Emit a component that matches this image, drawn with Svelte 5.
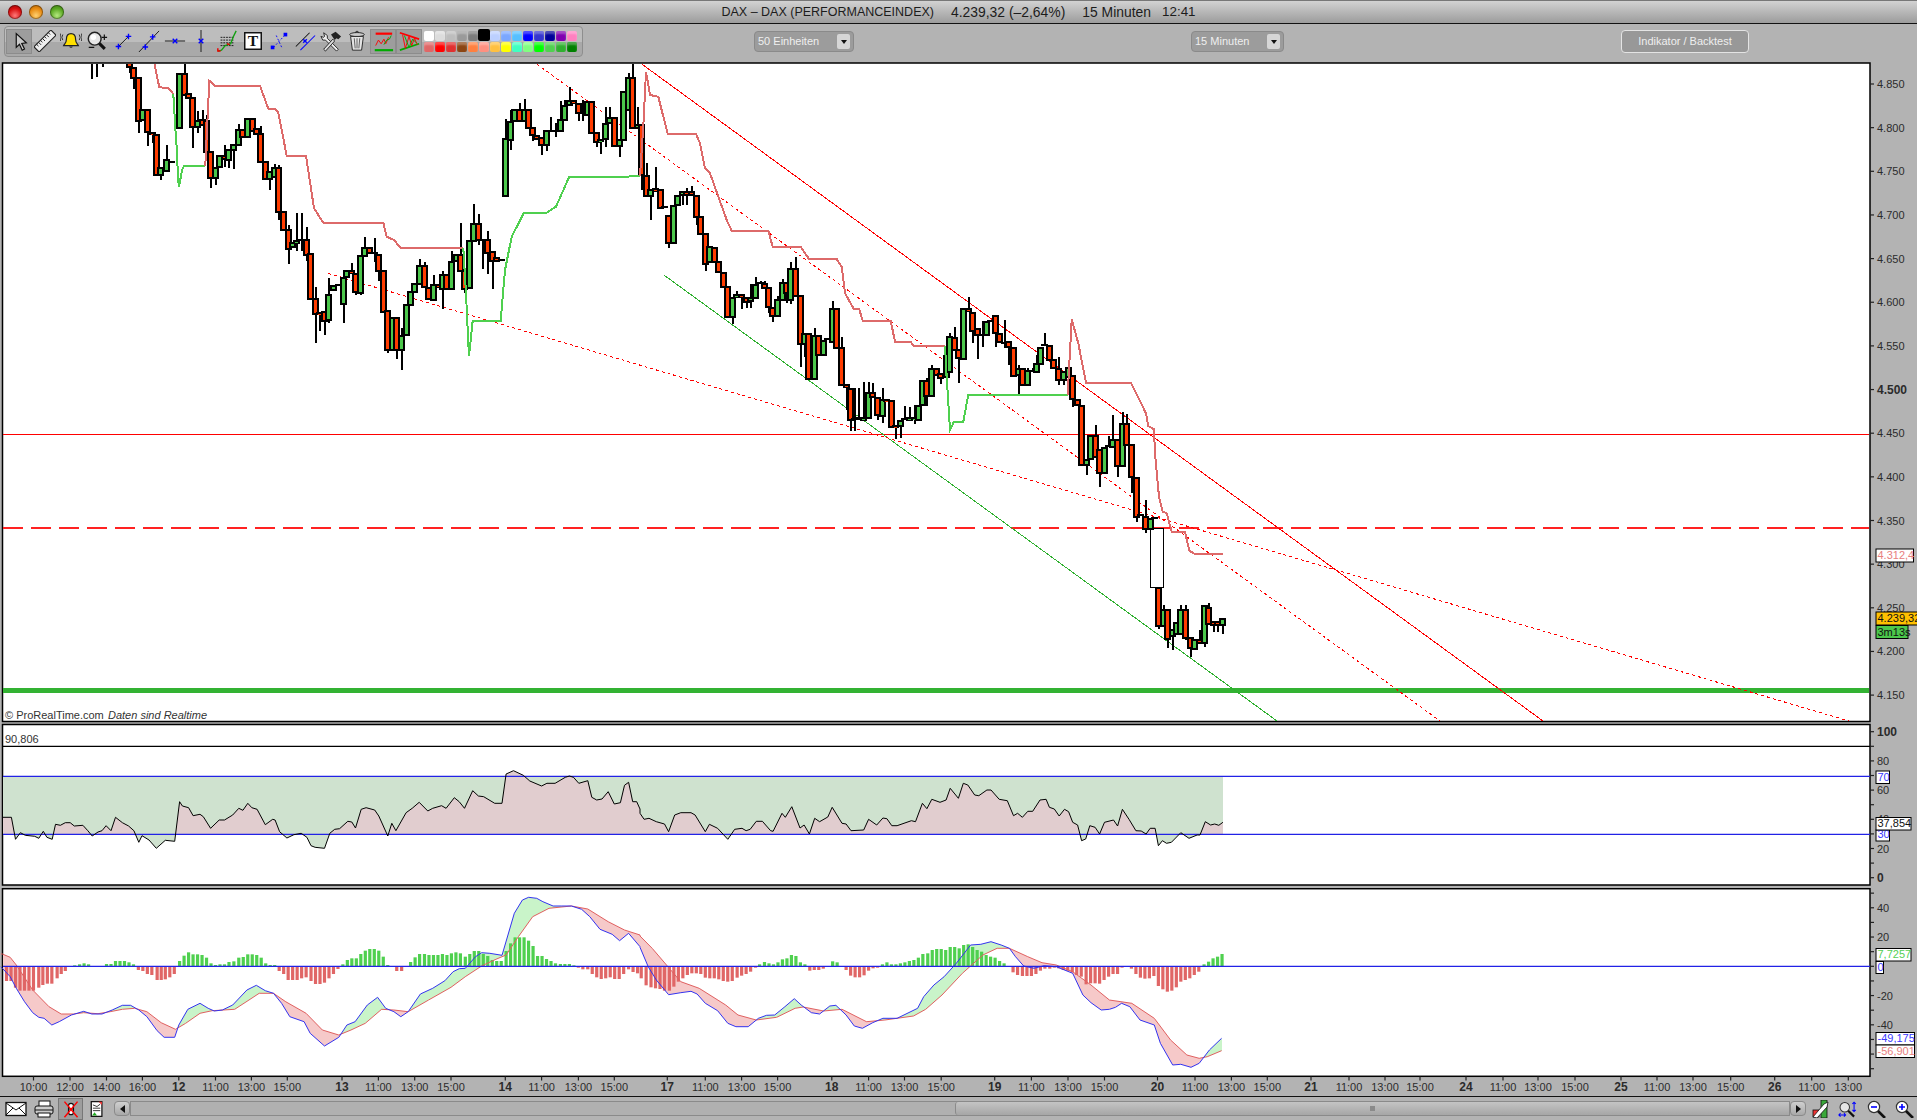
<script>
    // crop readings are kept in zoomed units, xy() brings them back to page pixels
    const xy = (ox, oy, sx, sy, str) =>
        str.trim().split(/\s+/).map((p) => {
            const [x, y] = p.split(',').map(Number);
            return [ox + x / sx, oy + y / sy];
        });
    const toPts = (list) => list.map((p) => `${p[0].toFixed(1)},${p[1].toFixed(1)}`).join(' ');
    const A = (s) => toPts(xy(90, 60, 3, 3, s));
    const B = (s) => toPts(xy(400, 60, 3, 3, s));
    const C = (s) => toPts(xy(700, 220, 3, 3, s));
    const D = (s) => toPts(xy(1000, 300, 3, 3, s));

    const stopLines = [
        ['#dd6a6a', A('193,10 208,82 235,84 250,102')],
        ['#4fd04f', A('250,102 255,185 258,240 262,280 263,350 267,382 276,330 282,317 346,317')],
        ['#dd6a6a', A('346,317 350,230 358,62 375,77 510,77 535,146 555,146 565,158 590,287 648,287 672,445 700,488 880,488 890,530 912,540 930,562')],
        ['#dd6a6a', B('0,564 190,564')],
        ['#4fd04f', B('190,564 198,700 205,850 207,888 218,782 302,782 315,630 335,530 372,458 440,458 468,440 508,350 678,350 720,347')],
        ['#dd6a6a', B('720,347 730,200 738,35 750,105 775,110 803,222 888,222 900,250 915,325 930,340')],
        ['#dd6a6a', C('30,-140 80,0 95,32 205,32 218,80 302,80 327,117 410,117 425,140 435,220 462,268 478,268 488,302 572,302 585,365 632,365 640,377 735,377')],
        ['#4fd04f', C('735,377 740,470 750,630 762,605 790,605 805,524 930,524')],
        ['#4fd04f', D('30,284 203,284')],
        ['#dd6a6a', D('203,284 215,58 235,130 258,248 393,248 438,340 445,378 462,388 465,460 477,590 488,635 500,640 515,695 555,695 568,752 585,762 668,762')]
    ];

    // x, body top, body bottom, high (0 = none), low (0 = none), colour
    const cropA = [
        [5,-9,-9,0,58,'r'],[20,-9,-9,0,52,'r'],[36,-9,-9,0,22,'r'],
        [118,1,22,1,40,'r'],[130,20,55,0,88,'r'],[146,50,182,0,218,'r'],[158,146,180,0,0,'g'],[172,146,215,0,258,'r'],
        [186,215,222,0,248,'r'],[200,222,345,0,0,'r'],[212,322,345,0,360,'g'],[228,298,332,255,0,'g'],[245,305,305,0,0,'g'],
        [268,38,205,0,0,'g'],[282,40,105,10,0,'r'],[296,100,115,0,0,'r'],[308,110,202,0,264,'r'],[322,180,202,152,218,'g'],
        [336,178,196,150,0,'r'],[348,180,275,165,275,'r'],[362,272,354,0,384,'r'],[376,320,354,0,376,'g'],[388,284,320,0,0,'g'],
        [402,285,296,255,320,'r'],[414,266,300,0,324,'g'],[430,252,270,0,326,'g'],[444,206,254,192,0,'g'],[456,206,230,0,0,'r'],
        [472,174,232,0,0,'g'],[486,174,212,0,0,'r'],[498,204,222,0,0,'r'],[512,218,306,198,0,'r'],[526,302,358,0,0,'r'],
        [538,334,358,0,390,'g'],[552,322,352,312,0,'g'],[566,322,456,316,480,'r'],[580,452,510,0,0,'r'],[594,508,566,495,612,'r'],
        [606,546,560,0,0,'g'],[620,540,548,460,574,'g'],[634,540,540,460,574,'g'],[648,536,584,502,604,'r'],[662,578,716,0,0,'r'],
        [676,714,762,680,848,'r'],[688,756,758,0,812,'r'],[702,754,782,0,824,'r'],[716,702,780,655,790,'g'],[730,676,690,0,0,'g'],
        [744,675,675,0,0,'g'],[760,650,732,0,788,'g'],[770,630,652,0,0,'g'],[784,630,640,610,0,'r'],[796,638,696,0,706,'r'],
        [810,584,698,0,706,'g'],[824,560,588,530,0,'g'],[838,562,580,0,0,'r'],[852,580,580,534,606,'r'],[866,582,632,0,662,'r'],
        [880,630,756,0,0,'r'],[892,750,870,0,878,'r'],[906,772,870,0,0,'g'],[920,772,870,0,898,'r']
    ];
    const cropB = [
        [5,825,870,805,930,'g'],[18,732,826,0,0,'g'],[30,692,736,0,0,'g'],[44,668,696,0,0,'g'],[58,614,672,596,0,'g'],
        [72,614,680,606,0,'r'],[86,680,716,0,0,'r'],[100,672,720,646,0,'g'],[114,672,680,0,0,'r'],[128,642,686,632,748,'g'],
        [140,642,686,0,0,'r'],[154,602,686,572,0,'g'],[168,582,602,0,0,'g'],[180,582,632,490,0,'r'],[192,630,686,0,700,'r'],
        [208,540,684,0,0,'g'],[220,488,544,433,0,'g'],[234,488,540,462,556,'r'],[246,540,540,0,626,'r'],[262,536,578,514,642,'r'],
        [276,574,602,0,686,'r'],[290,592,604,0,0,'r'],[304,600,600,0,0,'r'],
        [316,234,408,176,0,'g'],[332,182,240,150,270,'g'],[344,148,184,0,0,'g'],[358,148,182,130,0,'r'],[372,148,182,118,0,'g'],
        [386,146,204,0,0,'r'],[398,202,226,0,242,'r'],[410,224,236,0,0,'r'],[424,232,254,0,284,'r'],[438,210,256,0,272,'g'],
        [452,212,212,172,0,'g'],[466,212,212,190,232,'g'],[482,178,212,122,0,'g'],[494,134,180,120,0,'g'],[508,120,136,82,0,'g'],
        [520,120,130,0,0,'r'],[535,128,158,0,184,'r'],[548,158,158,120,184,'g'],[562,122,164,0,0,'g'],[575,122,218,0,0,'r'],
        [588,216,246,0,262,'r'],[600,236,244,0,282,'g'],[616,188,238,140,260,'g'],[628,170,190,140,0,'g'],[644,170,258,0,0,'r'],
        [658,236,258,0,290,'g'],[670,92,240,0,0,'g'],[684,52,150,40,0,'g'],[698,52,204,12,0,'r'],[712,192,204,140,0,'g'],
        [724,192,346,0,390,'r'],[738,346,408,308,0,'r'],[752,388,408,0,480,'g'],[766,384,394,322,0,'r'],[780,388,444,0,0,'r'],
        [792,442,442,0,0,'r'],[804,464,548,0,564,'r'],[820,434,548,0,0,'g'],[832,404,436,0,0,'g'],[846,392,404,0,436,'g'],
        [860,392,402,385,436,'r'],[874,394,404,378,0,'r'],[890,404,470,0,496,'r'],[902,468,522,0,0,'r'],[915,520,612,0,634,'r']
    ];
    const cropC = [
        [28,78,126,0,0,'g'],[43,80,125,0,0,'r'],[55,122,156,0,0,'r'],[70,156,200,0,0,'r'],[82,198,290,0,0,'r'],[96,232,290,0,312,'g'],
        [110,222,232,212,0,'g'],[124,222,232,0,268,'r'],[138,230,246,0,264,'r'],[150,232,244,192,264,'g'],[166,192,234,170,0,'g'],
        [180,190,190,182,0,'g'],[194,188,204,182,0,'r'],[206,200,262,0,280,'r'],[218,262,288,0,305,'r'],[232,236,288,228,0,'g'],
        [246,186,240,176,0,'g'],[258,186,218,0,250,'r'],[272,144,240,125,252,'g'],[286,144,228,110,0,'r'],[300,226,372,0,442,'r'],
        [312,340,372,0,412,'g'],[326,340,476,0,0,'r'],[342,345,476,325,0,'g'],[356,345,404,0,0,'r'],[370,360,404,0,0,'g'],
        [382,358,358,0,0,'g'],[396,264,366,244,0,'g'],[408,264,384,0,0,'r'],[424,380,494,350,0,'r'],[438,492,500,0,570,'r'],
        [452,504,600,0,634,'r'],[464,598,598,505,634,'r'],[476,595,595,505,600,'g'],[490,590,600,486,0,'g'],[504,516,594,486,0,'g'],
        [518,516,530,490,0,'r'],[532,530,586,0,600,'r'],[546,536,588,505,610,'g'],[560,536,542,0,0,'r'],[574,540,620,0,0,'r'],
        [586,616,622,0,656,'r'],[600,600,618,0,654,'g'],[614,598,598,558,0,'g'],[628,590,600,560,0,'g'],[642,590,598,555,612,'g'],
        [656,554,600,0,0,'g'],[668,480,556,0,0,'g'],[680,480,528,474,558,'r'],[694,444,528,436,0,'g'],[708,444,464,0,0,'r'],
        [722,460,474,0,492,'r'],[738,405,470,0,0,'g'],[748,348,455,340,0,'g'],[762,350,390,322,0,'r'],[776,388,414,0,488,'r'],
        [790,264,416,0,0,'g'],[804,264,272,230,0,'r'],[818,276,334,0,368,'r'],[832,324,346,0,418,'r'],[846,344,344,304,380,'r'],
        [860,302,344,0,0,'g'],[872,302,302,0,0,'g'],[886,286,340,0,380,'r'],[898,338,366,0,0,'r'],[912,368,368,300,384,'r'],[926,362,380,0,434,'r']
    ];
    const cropD = [
        [40,140,228,0,0,'r'],[54,204,226,195,282,'g'],[68,204,254,0,0,'r'],[82,210,256,204,0,'g'],[96,212,212,204,0,'g'],
        [110,190,216,166,0,'g'],[122,142,192,0,0,'g'],[134,136,136,100,0,'g'],[148,136,180,0,0,'r'],[160,178,204,0,0,'r'],
        [174,204,240,172,255,'r'],[190,212,240,0,254,'g'],[204,202,232,180,0,'g'],[216,226,296,0,322,'r'],[232,296,316,0,0,'r'],
        [244,316,494,0,0,'r'],[258,478,494,0,524,'g'],[270,406,476,0,0,'g'],[286,406,470,376,0,'r'],[298,446,518,0,560,'r'],
        [314,440,518,0,0,'g'],[326,438,438,408,0,'g'],[338,416,440,346,0,'g'],[352,416,498,0,530,'r'],[366,368,498,336,0,'g'],
        [380,368,434,342,0,'r'],[394,432,532,0,578,'r'],[410,530,652,0,666,'r'],[422,646,646,0,0,'g'],[436,648,688,600,698,'r'],
        [450,654,688,0,0,'g'],[464,654,654,0,0,'g'],[476,860,978,0,988,'r'],[490,928,978,916,0,'g'],[502,926,1016,0,1044,'r'],
        [516,986,1008,0,1050,'g'],[528,966,1002,0,0,'g'],[542,926,1002,914,0,'g'],[556,926,1014,914,1020,'r'],[570,1012,1044,0,1072,'r'],
        [584,1018,1046,0,1050,'g'],[598,1018,1028,990,0,'r'],[612,916,1030,0,1040,'g'],[626,922,972,908,0,'r'],[640,962,976,0,996,'r'],
        [652,964,976,0,996,'r'],[668,954,976,0,1002,'g']
    ];
    const place = (list, ox, oy) =>
        list.map(([x, t, b, h, l, c]) => ({
            x: Math.round(ox + x / 3 - 3.5),
            t: Math.round(oy + t / 3),
            b: Math.round(oy + b / 3),
            h: Math.round(oy + (h || t) / 3),
            l: Math.round(oy + (l || b) / 3),
            c
        }));
    const candles = [
        ...place(cropA, 90, 60),
        ...place(cropB, 400, 60),
        ...place(cropC, 700, 220),
        ...place(cropD, 1000, 300)
    ];

    const L = (s) => xy(0, 700, 2.45, 3, s);
    const R = (s) => xy(640, 700, 2.45, 3, s);

    const rsi = [
        ...L(`6,352 28,352 38,418 50,398 62,406 85,409 95,415 106,394 115,412 128,418 136,373 148,376 160,368 172,368 182,378 203,376 215,392 226,408 240,396 250,392 260,377 272,392 283,352 300,368 315,378 328,392 340,427 348,407 365,420 383,445 405,421 428,424 440,305 447,318 462,323 473,347 490,343 498,350 516,385 537,360 550,360 570,345 585,325 595,331 607,310 617,323 630,328 650,374 668,358 674,360 685,395 703,414 720,404 738,400 752,412 762,437 772,442 795,445 808,400 820,388 832,386 852,364 862,366 871,384 885,328 897,323 918,330 928,348 950,408 960,370 970,392 995,338 1010,325 1027,307 1048,333 1060,325 1082,317 1093,325 1113,293 1125,305 1138,325 1158,272 1172,288 1185,290 1212,310 1230,310 1240,222 1258,212 1282,226 1298,243 1327,258 1340,250 1360,250 1385,232 1395,228 1405,232 1418,250 1440,242 1450,292 1462,300 1475,297 1490,275 1505,312 1520,308 1530,256 1540,247 1550,305 1560,305 1568,327`),
        ...R(`0,340 10,358 22,355 40,365 60,372 70,395 85,345 100,338 125,338 135,345 160,395 170,373 190,385 215,418 232,388 250,385 260,392 270,388 285,364 300,364 320,392 326,394 348,340 356,352 372,320 392,384 402,375 415,402 428,355 440,365 460,351 471,322 495,370 505,372 517,392 548,390 560,358 580,375 595,354 605,356 617,377 630,377 665,362 675,365 692,310 703,326 715,298 735,307 750,300 760,265 780,295 792,250 803,255 820,285 830,287 850,270 860,270 880,298 900,302 915,347 925,340 937,352 950,334 962,334 980,300 995,298 1003,322 1015,327 1027,348 1040,328 1050,335 1060,367 1072,375 1082,422 1092,417 1102,377 1115,382 1126,402 1138,367 1160,360 1170,378 1182,328 1198,358 1215,392 1228,393 1240,402 1250,385 1262,385 1270,437 1280,422 1290,430 1302,427 1325,398 1345,415 1365,405 1372,405 1385,365 1398,375 1408,372 1418,376 1428,367`)
    ];
    const rsiArea = toPts([[2.5, 834.3], [2.5, rsi[0][1]], ...rsi, [rsi[rsi.length - 1][0], 834.3]]);

    const macdBlue = [
        ...L(`2,800 6,805 25,830 40,865 60,905 80,938 95,952 108,955 127,975 145,965 175,945 205,934 225,942 250,942 275,930 300,916 320,916 340,930 360,950 385,992 402,1012 428,1012 438,975 460,928 490,910 510,925 525,933 545,930 570,915 605,870 628,856 650,872 670,880 690,910 710,950 745,965 760,1000 795,1038 830,1012 850,975 870,965 900,915 925,892 945,925 965,935 982,950 1000,935 1030,882 1060,865 1090,842 1110,815 1125,806 1140,805 1165,770 1180,758 1200,760 1230,766 1260,640 1280,600 1295,592 1315,595 1330,605 1355,618 1375,618 1400,618 1425,628 1445,650 1470,688 1500,703 1518,722 1540,700 1568,740`),
        ...R(`0,742 20,800 40,840 70,884 100,878 125,874 140,882 160,910 190,932 215,970 235,980 265,980 290,955 310,946 330,945 355,920 378,896 395,915 420,938 440,942 465,918 480,916 505,945 525,978 545,985 570,968 595,955 630,955 680,925 695,890 720,855 745,830 775,790 810,735 835,733 860,725 885,735 905,745 920,770 940,798 965,805 990,797 1020,800 1060,820 1085,885 1105,908 1130,930 1150,928 1165,922 1180,910 1200,920 1225,960 1260,975 1275,1030 1305,1095 1325,1093 1350,1102 1370,1090 1395,1050 1425,1015`)
    ];
    const macdRed = [
        ...L(`2,762 6,762 25,772 40,795 80,870 120,920 150,942 180,942 205,938 240,941 270,935 300,928 330,925 360,935 395,968 430,988 455,970 490,940 520,932 575,928 610,900 635,880 670,880 700,905 750,940 790,990 830,1005 860,990 895,970 935,928 965,930 1000,935 1050,900 1105,862 1140,830 1180,798 1215,778 1240,765 1270,710 1305,650 1345,625 1400,618 1440,627 1490,665 1530,690 1568,705`),
        ...R(`0,708 30,745 65,795 100,845 145,865 210,915 240,945 285,960 335,952 380,925 400,921 450,933 495,928 555,965 600,960 670,948 700,928 740,885 790,820 840,765 875,745 905,745 950,770 985,788 1020,795 1060,815 1105,855 1150,900 1205,910 1260,955 1300,1020 1340,1065 1370,1075 1390,1070 1425,1052`)
    ];

    const valueAt = (line, x) => {
        for (let i = 1; i < line.length; i++) {
            if (x <= line[i][0]) {
                const [x0, y0] = line[i - 1];
                const [x1, y1] = line[i];
                return y0 + ((y1 - y0) * (x - x0)) / (x1 - x0 || 1);
            }
        }
        return line[line.length - 1][1];
    };
    let macdUp = '';
    let macdDown = '';
    for (let x = 3; x < 1222; x++) {
        const b0 = valueAt(macdBlue, x);
        const b1 = valueAt(macdBlue, x + 1);
        const r0 = valueAt(macdRed, x);
        const r1 = valueAt(macdRed, x + 1);
        const quad = `M${x} ${b0.toFixed(1)}L${x + 1} ${b1.toFixed(1)}L${x + 1} ${r1.toFixed(1)}L${x} ${r0.toFixed(1)}Z`;
        if (b0 + b1 < r0 + r1) macdUp += quad;
        else macdDown += quad;
    }

    const histLeft = `16,843 27,843 38,863 49,872 60,872 71,872 82,872 95,863 105,855 116,851 127,851 140,835 150,822 160,813 183,796 195,793 206,790 217,793 261,792 272,792 283,783 294,783 305,783 316,787 327,793 339,810 350,813 361,822 372,825 385,840 395,840 405,838 416,832 427,822 440,783 451,767 462,757 473,763 484,763 495,765 506,773 517,790 528,795 539,793 550,793 561,786 573,784 585,773 596,771 607,763 618,763 629,765 640,773 651,790 662,795 673,795 684,813 695,822 706,840 717,840 728,840 739,835 750,832 762,843 773,852 784,852 795,848 806,835 817,822 828,807 840,793 851,780 862,775 873,775 884,762 895,752 906,747 917,747 928,752 939,770 950,795 972,813 984,813 1006,786 1017,772 1028,762 1040,762 1051,765 1062,765 1073,765 1084,762 1095,765 1106,760 1117,757 1128,760 1140,770 1151,762 1162,753 1173,753 1184,762 1195,768 1206,780 1217,783 1228,783 1240,753 1251,730 1262,712 1273,712 1284,712 1295,722 1306,738 1317,768 1328,768 1339,777 1350,783 1361,790 1373,792 1384,792 1395,792 1406,796 1417,803 1428,808 1440,808 1451,822 1462,832 1473,837 1484,835 1495,832 1506,837 1517,837 1528,822 1540,808 1551,816 1562,820`;
    const histRight = `3,835 15,856 27,862 38,865 49,867 60,872 72,872 83,860 94,845 105,835 116,825 127,820 138,820 149,822 160,833 171,835 182,835 193,838 204,843 215,845 226,843 238,833 249,827 260,822 271,815 283,803 293,793 305,786 316,790 327,793 338,787 349,778 360,775 371,765 382,768 393,787 404,793 416,812 427,810 438,810 449,806 472,784 483,787 505,810 516,827 527,832 538,832 549,826 560,812 571,805 582,803 594,793 605,787 616,793 627,793 638,790 649,787 660,783 671,780 682,773 693,762 705,760 716,750 727,747 738,747 749,750 760,741 771,741 782,745 793,735 804,733 815,741 826,750 837,755 848,765 859,770 870,773 881,783 892,790 914,817 925,825 937,828 948,828 959,828 970,822 981,812 992,806 1004,806 1015,803 1026,805 1037,810 1048,812 1059,817 1070,825 1081,830 1093,853 1104,850 1115,850 1126,851 1137,840 1148,830 1159,822 1170,822 1181,803 1204,806 1215,822 1226,833 1237,836 1248,835 1259,828 1270,858 1281,868 1292,875 1303,872 1314,862 1325,845 1336,840 1347,835 1358,825 1369,815 1382,793 1393,785 1404,775 1415,770 1426,762`;
    const hist = [...L(histLeft), ...R(histRight)];

    const priceTicks = [4850, 4800, 4750, 4700, 4650, 4600, 4550, 4500, 4450, 4400, 4350, 4300, 4250, 4200, 4150].map((p) => ({
        y: 84 + (4850 - p) * 0.873,
        label: `${String(p)[0]}.${String(p).slice(1)}`,
        bold: p === 4500
    }));
    const rsiTicks = [100, 90, 80, 70, 60, 50, 40, 30, 20, 10, 0].map((v) => ({ v, y: 877.7 - v * 1.46 }));
    const macdTicks = [50, 40, 30, 20, 10, 0, -10, -20, -30, -40, -50, -60, -70].map((v) => ({ v, y: 966.3 - v * 1.463 }));

    const times = [
        [33.5, '10:00'], [70, '12:00'], [106.5, '14:00'], [142.4, '16:00'], [178.8, '12', 1], [215.5, '11:00'], [251.4, '13:00'], [287.3, '15:00'],
        [342, '13', 1], [378.4, '11:00'], [414.7, '13:00'], [451, '15:00'], [505.3, '14', 1], [541.6, '11:00'], [578.4, '13:00'], [614.3, '15:00'],
        [667.3, '17', 1], [705.3, '11:00'], [741.6, '13:00'], [777.6, '15:00'], [831.8, '18', 1], [868.6, '11:00'], [904.5, '13:00'], [941.2, '15:00'],
        [994.7, '19', 1], [1031.4, '11:00'], [1068, '13:00'], [1104.5, '15:00'], [1157.5, '20', 1], [1195, '11:00'], [1231.4, '13:00'], [1267.3, '15:00'],
        [1311, '21', 1], [1349, '11:00'], [1385, '13:00'], [1420, '15:00'], [1466, '24', 1], [1503, '11:00'], [1538, '13:00'], [1575, '15:00'],
        [1621, '25', 1], [1657, '11:00'], [1693, '13:00'], [1730.7, '15:00'], [1774.7, '26', 1], [1811.7, '11:00'], [1848.3, '13:00']
    ];

    const swatchTop = ['#ffffff', '#dcdcdc', '#bdbdbd', '#9a9a9a', '#7c7c7c', '#000000', '#bcd0ff', '#7aa7ff', '#55c0ff', '#0000ff', '#3535cf', '#000099', '#8000b0', '#ff80c0'];
    const swatchBottom = ['#e06666', '#ff0000', '#e03030', '#8b4513', '#ff8040', '#ff9080', '#ffc040', '#ffff00', '#40ffc0', '#80ff80', '#00ff00', '#50d050', '#30b030', '#008000'];
</script>

{#snippet tag(y, h, w, fill, color, text)}
    <rect x="1876" y={y} width={w} height={h} fill={fill} stroke="#000" stroke-width="1" />
    <text x="1877.5" y={y + h - 3} style="fill: {color}" class="axis">{text}</text>
{/snippet}

<div class="window">
    <header class="titlebar">
        <div class="lights">
            <span class="light red"></span>
            <span class="light orange"></span>
            <span class="light green"></span>
        </div>
        <div class="title">
            <span class="name">DAX – DAX (PERFORMANCEINDEX)</span>
            <span>4.239,32 (–2,64%)</span>
            <span>15 Minuten</span>
            <span class="clock">12:41</span>
        </div>
    </header>

    <div class="toolbar">
        <div class="tools">
            <span class="tool on"><svg viewBox="0 0 24 24"><path d="M9 4v15l3.5-3.5 3 6.5 2.5-1.2-3-6.2 5-.6z" fill="#c8c8c8" stroke="#111" stroke-width="1.3" /></svg></span>
            <span class="tool"><svg viewBox="0 0 24 24"><g transform="rotate(-45 12 12)"><rect x="-1" y="8" width="26" height="8" fill="#eee" stroke="#222" stroke-width="1.2" /><path d="M3 8v3M6 8v4M9 8v3M12 8v4M15 8v3M18 8v4M21 8v3" stroke="#222" /></g></svg></span>
            <span class="tool"><svg viewBox="0 0 24 24"><path d="M12 4c-4 0-5 3-5 6 0 4-2 5-3 7h16c-1-2-3-3-3-7 0-3-1-6-5-6z" fill="#ffe000" stroke="#222" stroke-width="1.3" /><path d="M10 18a2.2 2.2 0 0 0 4 0z" fill="#222" /><path d="M3 5q-2 3 0 6M21 5q2 3 0 6M.5 4q-1 4 0 8M23.5 4q1 4 0 8" fill="none" stroke="#222" /></svg></span>
            <span class="tool"><svg viewBox="0 0 24 24"><circle cx="9.5" cy="9.5" r="7" fill="#e6e6e6" stroke="#222" stroke-width="1.6" /><circle cx="8" cy="8" r="3" fill="#fff" /><path d="M14.5 14.5l6 6" stroke="#111" stroke-width="3.4" /><path d="M17 8h6M20 5v6M3 19h6" stroke="#111" stroke-width="1.3" /></svg></span>
            <span class="tool"><svg viewBox="0 0 24 24"><path d="M7 18L18 7" stroke="#111" /><path d="M4 18h6M7 15v6M15 7h6M18 4v6" stroke="#00f" stroke-width="1.5" /></svg></span>
            <span class="tool"><svg viewBox="0 0 24 24"><path d="M1 24L23 1" stroke="#111" /><path d="M5 18.5h6M8 15.5v6M13 7.5h6M16 4.5v6" stroke="#00f" stroke-width="1.6" /></svg></span>
            <span class="tool"><svg viewBox="0 0 24 24"><path d="M1 12h22" stroke="#111" /><path d="M9.5 9.5l5 5M14.5 9.5l-5 5" stroke="#00f" stroke-width="1.5" /></svg></span>
            <span class="tool"><svg viewBox="0 0 24 24"><path d="M12 0v24" stroke="#111" /><path d="M9.5 9.5l5 5M14.5 9.5l-5 5" stroke="#00f" stroke-width="1.5" /></svg></span>
            <span class="tool"><svg viewBox="0 0 24 24"><path d="M5 8h14M5 11h14M5 14h14M5 17h14" stroke="#111" stroke-dasharray="2 1" /><path d="M2 23l4-1 4-5 6-2 3-8 3-6" fill="none" stroke="#12a012" stroke-width="1.5" /><path d="M2 20v3h3M12 15l3 1" fill="none" stroke="#e00" stroke-width="1.6" /></svg></span>
            <span class="tool"><svg viewBox="0 0 24 24"><rect x="3" y="3" width="18" height="18" fill="#fff" stroke="#111" stroke-width="1.6" /><text x="12" y="17.5" text-anchor="middle" class="t-glyph">T</text></svg></span>
            <span class="tool"><svg viewBox="0 0 24 24"><path d="M6 19L18 6M9 6l6 13" stroke="#00f" stroke-dasharray="2 2" /><rect x="3" y="17" width="4" height="4" fill="#00f" /><rect x="17" y="3" width="4" height="4" fill="#00f" /></svg></span>
            <span class="tool"><svg viewBox="0 0 24 24"><path d="M2 18L17 3" stroke="#111" stroke-width="1.1" /><path d="M7 22L23 6" stroke="#00f" stroke-width="1.1" /><path d="M10 10l4 4M14 10l-4 4" stroke="#00f" stroke-width="1.5" /></svg></span>
            <span class="tool"><svg viewBox="0 0 24 24"><path d="M4 3l4 3v3l12 12-2 2L6 11H3L1 7l3 1 1-1z" fill="#eee" stroke="#222" stroke-width="1" /><path d="M4 21l10-11 2 2L6 23z" fill="#ddd" stroke="#222" stroke-width="1" /><path d="M12 5l5-3 6 5-3 3-2-1-2 2z" fill="#222" /></svg></span>
            <span class="tool"><svg viewBox="0 0 24 24"><ellipse cx="12" cy="5" rx="8" ry="2.2" fill="#ccc" stroke="#222" /><path d="M10 3l1-1.5h2l1 1.5" fill="none" stroke="#222" /><path d="M5 7l2 15h10l2-15z" fill="#e4e4e4" stroke="#222" /><path d="M9 9l1 11M12 9v11M15 9l-1 11" stroke="#555" /></svg></span>
            <span class="tool on"><svg viewBox="0 0 24 24"><path d="M4 4h18" stroke="#f00" stroke-width="2.4" /><path d="M3 22h20" stroke="#0a0" stroke-width="2.4" /><path d="M4 17l3-6 3 4 3-5 2 5 3-7" fill="none" stroke="#f00" /><path d="M13 16l3-5 3-1 2-4" fill="none" stroke="#0a0" /></svg></span>
            <span class="tool on"><svg viewBox="0 0 24 24"><path d="M2 3l21 7" stroke="#f00" stroke-width="2" /><path d="M2 22l21-7" stroke="#0a0" stroke-width="2" /><path d="M5 5l3 15 4-13 3 10 3-8 3 7" fill="none" stroke="#f00" /><path d="M7 6l5 13 4-9 4 4" fill="none" stroke="#0a0" /></svg></span>
            <div class="swatches">
                {#each swatchTop as c}
                    <span class="swatch" class:picked={c === '#000000'} style="background: {c}"></span>
                {/each}
                {#each swatchBottom as c}
                    <span class="swatch" style="background: {c}"></span>
                {/each}
            </div>
        </div>
        <div class="picker first">50 Einheiten<i></i></div>
        <div class="picker second">15 Minuten<i></i></div>
        <button class="backtest">Indikator / Backtest</button>
    </div>

    <svg class="pane" style="height: 661px" viewBox="0 62 1917 661">
        <defs>
            <clipPath id="mainclip"><rect x="3" y="64" width="1866" height="657" /></clipPath>
        </defs>
        <rect x="2.5" y="63" width="1867.5" height="658.5" fill="#fff" stroke="#000" stroke-width="1.5" />
        <g clip-path="url(#mainclip)" class="pix">
            <path d="M3 434.3H1869" stroke="#f00" stroke-width="1" />
            <path d="M3 528.3H1869" stroke="#f22" stroke-width="2" stroke-dasharray="20 8" />
            <rect x="3" y="688" width="1866" height="5" fill="#33b233" />
            <path d="M641.7 64L1543 721" stroke="#f00" stroke-width="1" />
            <path d="M664.3 275.3L1277 721" stroke="#2fb02f" stroke-width="1" />
            <path d="M536.7 64L1440 721" stroke="#f00" stroke-width="1" stroke-dasharray="3 3" />
            <path d="M328 273.3L1849 721" stroke="#f00" stroke-width="1" stroke-dasharray="3 3" />
            <rect x="1150.5" y="528.5" width="13" height="59" fill="#fff" stroke="#000" stroke-width="1" />
            {#each candles as k}
                <rect x={k.x + 2.5} y={k.h} width="2" height={k.l - k.h} fill="#000" />
            {/each}
            {#each candles as k}
                {#if k.b - k.t < 1}
                    <rect x={k.x} y={k.t - 1} width="7" height="2" fill="#000" />
                {:else}
                    <rect x={k.x} y={k.t} width="7" height={k.b - k.t + 1} fill="#000" />
                    <rect x={k.x + 2} y={k.t + 2} width="3" height={Math.max(k.b - k.t - 3, 1)} fill={k.c === 'g' ? '#4bc74b' : '#ff3c00'} />
                {/if}
            {/each}
            {#each stopLines as [color, points]}
                <polyline {points} fill="none" stroke={color} stroke-width="2" />
            {/each}
        </g>
        <text x="5" y="719" class="axis note">© ProRealTime.com</text>
        <text x="108" y="719" class="axis note slanted">Daten sind Realtime</text>
        {#each priceTicks as t}
            <path d="M1870 {t.y}h4" stroke="#222" stroke-width="1.2" />
            <text x="1877" y={t.y + 4} class="axis" class:strong={t.bold}>{t.label}</text>
        {/each}
        {@render tag(549, 13, 37.5, '#fff', '#e88080', '4.312,4')}
        {@render tag(612, 13, 42, '#ffc000', '#111', '4.239,32')}
        {@render tag(625.5, 13, 32, '#4bc74b', '#111', '3m13s')}
    </svg>

    <svg class="pane" style="height: 165px" viewBox="0 723 1917 165">
        <defs>
            <clipPath id="above"><rect x="3" y="724" width="1866" height="110.3" /></clipPath>
            <clipPath id="below"><rect x="3" y="834.3" width="1866" height="50" /></clipPath>
        </defs>
        <rect x="2.5" y="724.5" width="1867.5" height="160.5" fill="#fff" stroke="#000" stroke-width="1.5" />
        <rect x="3" y="776.3" width="1220" height="58" fill="#cfe2cf" />
        <polygon points={rsiArea} fill="#e1cdcf" clip-path="url(#above)" />
        <polygon points={rsiArea} fill="#cfe2cf" clip-path="url(#below)" />
        <path d="M3 746.3H1870" stroke="#000" stroke-width="1.2" />
        <path d="M3 776.3H1870M3 834.3H1870" stroke="#2222e6" stroke-width="1.2" />
        <polyline points={toPts(rsi)} fill="none" stroke="#000" stroke-width="1" />
        <text x="5" y="743" class="axis note">90,806</text>
        {#each rsiTicks as t}
            <path d="M1870 {t.y}h4" stroke="#222" stroke-width="1.2" />
            {#if t.v % 20 === 0}
                <text x="1877" y={t.y + 4} class="axis" class:strong={t.v === 100 || t.v === 0}>{t.v}</text>
            {/if}
        {/each}
        {@render tag(771, 12.5, 13.5, '#fff', '#3a3aff', '70')}
        {@render tag(830, 11, 13.5, '#fff', '#3a3aff', '30')}
        {@render tag(817.5, 12.5, 35, '#fff', '#111', '37,854')}
    </svg>

    <svg class="pane" style="height: 208px" viewBox="0 888 1917 208">
        <rect x="2.5" y="888.7" width="1867.5" height="187.6" fill="#fff" stroke="#000" stroke-width="1.5" />
        <path d={macdUp} fill="#c9f4c9" shape-rendering="crispEdges" />
        <path d={macdDown} fill="#f6c9c9" shape-rendering="crispEdges" />
        {#each hist as [x, y]}
            <rect x={x - 1.6} y={Math.min(y, 966.3)} width="3.2" height={Math.abs(y - 966.3)} fill={y < 966.3 ? '#4fd04f' : '#e06666'} />
        {/each}
        <polyline points={toPts(macdRed)} fill="none" stroke="#e06060" stroke-width="1" />
        <polyline points={toPts(macdBlue)} fill="none" stroke="#3333f0" stroke-width="1" />
        <path d="M3 966.3H1870" stroke="#2222e6" stroke-width="1.2" />
        {#each macdTicks as t}
            <path d="M1870 {t.y}h4" stroke="#222" stroke-width="1.2" />
            {#if t.v % 20 === 0 && t.v !== 0 && t.v !== -60}
                <text x="1877" y={t.y + 4} class="axis">{t.v}</text>
            {/if}
        {/each}
        {@render tag(948.5, 12.5, 35, '#fff', '#55d055', '7,7257')}
        {@render tag(961.5, 12, 7.5, '#fff', '#3a3aff', '0')}
        {@render tag(1032.5, 12.5, 38.5, '#fff', '#3a3aff', '-49,175')}
        {@render tag(1045, 12.5, 38.5, '#fff', '#e88080', '-56,901')}
        {#each times as [x, label, bold]}
            <path d="M{x} 1076.5v4" stroke="#222" stroke-width="1.2" />
            <text x={x} y={1091} text-anchor="middle" class="axis" class:strong={bold}>{label}</text>
        {/each}
    </svg>

    <footer class="bottombar">
        <span class="cell"><svg viewBox="0 0 22 18"><rect x="1" y="2.5" width="20" height="13" fill="#fff" stroke="#111" stroke-width="1.3" /><path d="M1 3l10 7 10-7M1 15l7-7M21 15l-7-7" fill="none" stroke="#111" /></svg></span>
        <span class="cell"><svg viewBox="0 0 22 18"><rect x="6" y="1" width="11" height="6" fill="#fff" stroke="#111" /><rect x="2" y="6" width="18" height="8" rx="2" fill="#ccc" stroke="#111" /><path d="M2 10h18" stroke="#111" /><rect x="5" y="13" width="12" height="4" fill="#fff" stroke="#111" /></svg></span>
        <span class="cell pressed"><svg viewBox="0 0 22 22"><rect x="8" y="4" width="6" height="14" rx="3" fill="#fff" stroke="#111" stroke-width="1.5" /><path d="M8 11h6" stroke="#111" stroke-width="1.5" /><path d="M3 2l16 19M19 2L3 21" stroke="#f00" stroke-width="1.8" /></svg></span>
        <span class="cell"><svg viewBox="0 0 22 22"><rect x="4" y="2" width="13" height="18" fill="#fff" stroke="#111" stroke-width="1.5" /><path d="M6 6l5 2 4-3M6 10h9M6 13h9" fill="none" stroke="#111" /><path d="M13 2h4v4z" fill="#e33" /><path d="M5 19l3-4 3 4z" fill="#2a2" /></svg></span>
        <div class="scroll">
            <span class="arrow"><i class="left"></i></span>
            <div class="track">
                <div class="thumb"><b></b></div>
            </div>
            <span class="arrow"><i class="right"></i></span>
        </div>
        <div class="zooms">
            <span class="cell small"><svg viewBox="0 0 22 18"><rect x="11" y="0" width="6" height="18" fill="#3aa83a" stroke="#111" stroke-width=".8" /><rect x="3" y="10" width="6" height="7" fill="#e33" stroke="#111" stroke-width=".8" /><path d="M3 17L14 4l4-2-1 5-10 11z" fill="#fff" stroke="#111" stroke-width=".8" /></svg></span>
            <span class="cell small"><svg viewBox="0 0 26 18"><circle cx="8" cy="7" r="5.6" fill="#e6e6e6" stroke="#333" stroke-width="1.2" /><path d="M12 11l7 7" stroke="#111" stroke-width="2.6" /><path d="M19 1v11M17 3l2-2 2 2M17 10l2 2 2-2M1 16h8M3 14l-2 2 2 2M7 14l2 2-2 2" fill="none" stroke="#00f" stroke-width="1.2" /></svg></span>
            <span class="cell small"><svg viewBox="0 0 22 18"><circle cx="8" cy="7" r="5.6" fill="#fff" stroke="#333" stroke-width="1.2" /><path d="M5 7h6" stroke="#00f" stroke-width="1.6" /><path d="M12 11l7 7" stroke="#111" stroke-width="2.6" /></svg></span>
            <span class="cell small"><svg viewBox="0 0 22 18"><circle cx="8" cy="7" r="5.6" fill="#fff" stroke="#333" stroke-width="1.2" /><path d="M5 7h6M8 4v6" stroke="#00f" stroke-width="1.6" /><path d="M12 11l7 7" stroke="#111" stroke-width="2.6" /></svg></span>
        </div>
    </footer>
</div>

<style>
    :global(body) {
        background: #b3b3b3;
    }

    .window {
        display: flex;
        flex-direction: column;
        width: 1917px;
        height: 1120px;
        overflow: hidden;
        background: #b3b3b3;
        font-family: "Liberation Sans", Arial, sans-serif;
    }

    .titlebar {
        position: relative;
        display: flex;
        align-items: center;
        justify-content: center;
        box-sizing: border-box;
        height: 24px;
        border-top: 1px solid #777;
        border-bottom: 1px solid #111;
        background: linear-gradient(#d2d2d2, #9c9c9c);
    }

    .lights {
        position: absolute;
        left: 8px;
        top: 4px;
        display: flex;
        gap: 7px;
    }

    .light {
        width: 14px;
        height: 14px;
        border-radius: 50%;
        box-shadow: inset 0 0 0 1px rgba(0, 0, 0, 0.35);
    }

    .light.red {
        background: radial-gradient(circle at 50% 75%, #ff7a7a, #d80f0f 55%, #8a0808);
    }

    .light.orange {
        background: radial-gradient(circle at 50% 75%, #ffd070, #e88a10 55%, #a05a08);
    }

    .light.green {
        background: radial-gradient(circle at 50% 75%, #b4e880, #5aa822 55%, #3a7010);
    }

    .title {
        display: flex;
        gap: 17px;
        font-size: 13.9px;
        color: #1c1c1c;
    }

    .title .name {
        font-size: 12.5px;
        line-height: 16px;
    }

    .title .clock {
        margin-left: -6px;
        font-size: 13.4px;
    }

    .toolbar {
        display: flex;
        align-items: center;
        box-sizing: border-box;
        height: 38px;
        padding: 0 0 4px 4px;
        background: #b3b3b3;
    }

    .tools {
        display: flex;
        align-items: stretch;
        box-sizing: border-box;
        width: 579px;
        height: 31px;
        padding: 2px 1px;
        border: 1px solid #8e8e8e;
        border-radius: 4px;
        background: linear-gradient(#bdbdbd 50%, #a9a9a9 50%);
    }

    .tool {
        display: flex;
        align-items: center;
        justify-content: center;
        width: 26px;
        flex: none;
    }

    .tool svg {
        width: 22px;
        height: 22px;
    }

    .tool.on {
        background: #9d9d9d;
        box-shadow: inset 0 0 0 1px #8c8c8c;
    }

    .swatches {
        display: grid;
        grid-template-columns: repeat(14, 10px);
        grid-auto-rows: 10px;
        gap: 1px;
        margin-left: 2px;
        align-content: center;
    }

    .swatch {
        border-radius: 2px;
        box-shadow: inset 0 3px 2px rgba(255, 255, 255, 0.3);
    }

    .swatch.picked {
        margin: -2px -1px 0;
        box-shadow: none;
    }

    .picker {
        position: relative;
        box-sizing: border-box;
        height: 21px;
        padding-left: 3px;
        border: 1px solid #8a8a8a;
        border-radius: 4px;
        background: #9c9c9c;
        color: #efefef;
        font-size: 11px;
        line-height: 19px;
    }

    .picker i {
        position: absolute;
        right: 3px;
        top: 2px;
        width: 13px;
        height: 15px;
        border-radius: 2px;
        background: #d6d6d6;
    }

    .picker i::after {
        content: "";
        position: absolute;
        left: 4px;
        top: 6px;
        border: 3px solid transparent;
        border-top: 4px solid #111;
        border-bottom: 0;
    }

    .first {
        width: 100px;
        margin-left: 171px;
    }

    .second {
        width: 93px;
        margin-left: 337px;
    }

    .backtest {
        box-sizing: border-box;
        width: 128px;
        height: 23px;
        margin-left: 337px;
        padding: 0;
        border: 1.5px solid #e4e4e4;
        border-radius: 4px;
        background: #989898;
        color: #efefef;
        font-family: inherit;
        font-size: 11px;
    }

    .pane {
        display: block;
        flex: none;
        width: 1917px;
    }

    .pix {
        shape-rendering: crispEdges;
    }

    .axis {
        font-family: "Liberation Sans", Arial, sans-serif;
        font-size: 11px;
        fill: #2b2b2b;
    }

    .note {
        fill: #333;
    }

    .slanted {
        font-style: italic;
    }

    .strong {
        font-weight: bold;
        font-size: 12px;
    }

    .t-glyph {
        font-family: "Liberation Serif", serif;
        font-weight: bold;
        font-size: 17px;
        fill: #111;
    }

    .bottombar {
        display: flex;
        align-items: center;
        flex: none;
        box-sizing: border-box;
        height: 24px;
        padding-left: 2px;
        border-top: 1px solid #111;
        background: #b3b3b3;
    }

    .cell {
        display: flex;
        align-items: center;
        justify-content: center;
        flex: none;
        width: 28px;
        height: 22px;
    }

    .cell svg {
        height: 18px;
        width: 22px;
    }

    .cell.pressed {
        width: 25px;
        background: #9d9d9d;
        box-shadow: inset 0 0 0 1px #777;
    }

    .scroll {
        display: flex;
        align-items: center;
        flex: none;
        width: 1692px;
        height: 15px;
        margin-left: 3px;
    }

    .arrow {
        display: flex;
        align-items: center;
        justify-content: center;
        flex: none;
        width: 16px;
        height: 15px;
        border: 1px solid #8a8a8a;
        box-sizing: border-box;
        border-radius: 4px;
        background: linear-gradient(#d0d0d0, #a8a8a8);
    }

    .arrow i {
        border: 4px solid transparent;
    }

    .arrow .left {
        border-right: 5px solid #111;
        border-left: 0;
    }

    .arrow .right {
        border-left: 5px solid #111;
        border-right: 0;
    }

    .track {
        display: flex;
        justify-content: flex-end;
        flex: 1;
        box-sizing: border-box;
        height: 15px;
        border: 1px solid #8a8a8a;
        background: #b0b0b0;
    }

    .thumb {
        display: flex;
        align-items: center;
        justify-content: center;
        box-sizing: border-box;
        width: 834px;
        border-left: 1px solid #8a8a8a;
        border-radius: 3px 0 0 3px;
        background: linear-gradient(#c4c4c4, #a6a6a6);
    }

    .thumb b {
        width: 5px;
        height: 5px;
        background: #8a8a8a;
    }

    .zooms {
        display: flex;
        margin-left: 1px;
    }

    .cell.small {
        width: 28px;
    }
</style>
